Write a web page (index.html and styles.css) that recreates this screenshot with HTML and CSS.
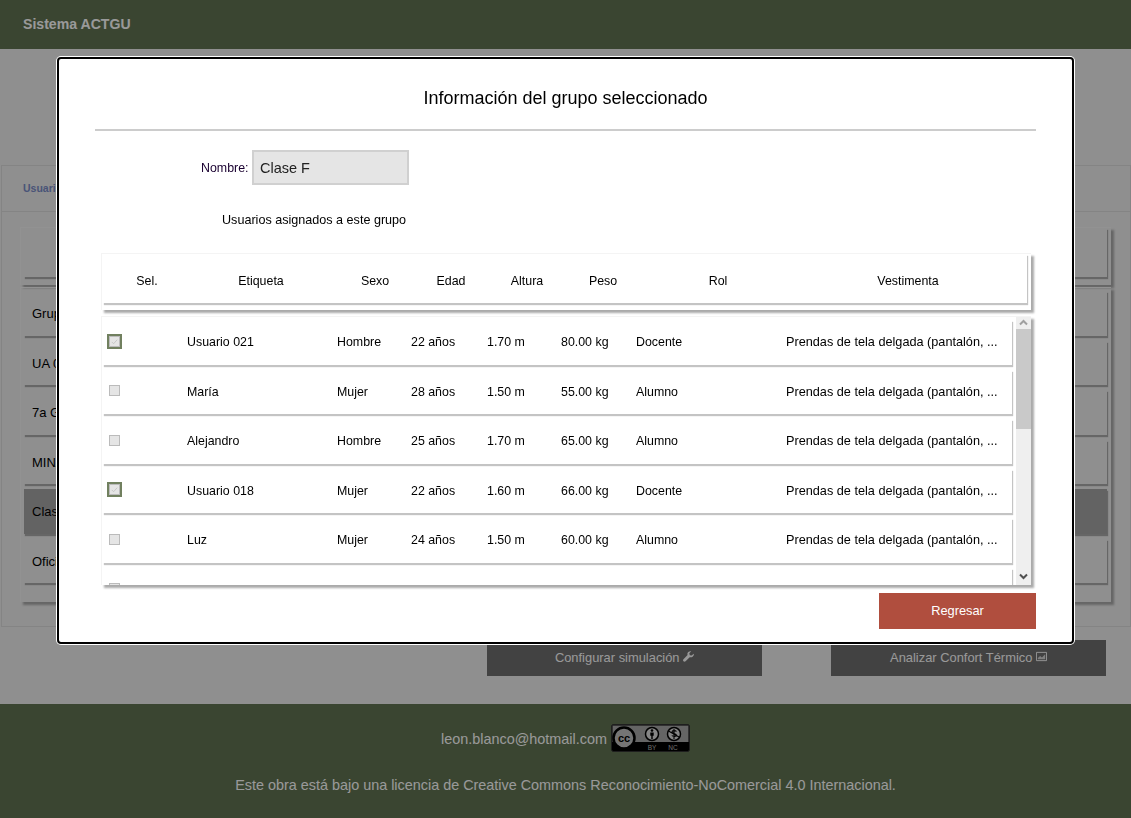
FILE: index.html
```html
<!DOCTYPE html>
<html>
    <head>
        <meta http-equiv=Content-Type content=text/html;charset=UTF-8>
        <title>Sistema ACTGU</title>
        <link rel="stylesheet" href="styles.css">
    </head>
    <body>
        <header class=topbar>Sistema ACTGU</header>

        <main class=page>
            <section class=panel>
                <div class=tabs><a class=tab>Usuarios</a></div>
                <div class=groups>
                    <div class="card card-head">
                        <div class="row"></div>
                    </div>
                    <div class="card card-list">
                        <div class="row">Grupo A</div>
                        <div class="row">UA 01</div>
                        <div class="row">7a Generación</div>
                        <div class="row">MINAE</div>
                        <div class="row row-active">Clase F</div>
                        <div class="row">Oficina</div>
                    </div>
                </div>
            </section>
            <div class=actions>
                <a class=action>Configurar simulación
                    <svg class=icon viewBox="0 0 12 12"><path d="M11.6 2.9 9.5 5 7.4 4.5 6.9 2.4 9 .3C7.4-.2 5.6.6 5 2.2c-.3.8-.3 1.5 0 2.2L.5 8.9c-.6.6-.6 1.6 0 2.3.6.6 1.6.6 2.3 0l4.5-4.5c1.800.7 3.700-.2 4.400-2 .2-.6.2-1.200-.1-1.800z" fill="currentColor"/></svg>
                </a>
                <a class=action>Analizar Confort Térmico
                    <svg class=icon viewBox="0 0 12 10"><path d="M.5.5h11v9H.5z" fill="none" stroke="currentColor"/><path d="M2 8V6.500l2.500-2 2 1.500L10 2.500V8z" fill="currentColor" opacity=".7"/></svg>
                </a>
            </div>
        </main>

        <footer class=footer>
            <div class=contact>
                <span class=email>leon.blanco@hotmail.com</span>
                <svg class=cc viewBox="0 0 79 28">
                    <rect x=".5" y=".5" width="78" height="27" rx="2" fill="#000" stroke="#333"/>
                    <rect x="1.500" y="1.500" width="76" height="16.500" fill="#a8a8a8"/>
                    <circle cx="13" cy="14" r="10.500" fill="#c4c4c4" stroke="#000" stroke-width="2.500"/>
                    <text x="13" y="18" class=cc-mark>cc</text>
                    <circle cx="41" cy="10" r="6.500" fill="#e0e0e0" stroke="#000" stroke-width="1.500"/>
                    <circle cx="41" cy="6.500" r="1.300" fill="#000"/>
                    <path d="M39.300 8.500h3.400v3.200h-1v3.300h-1.400v-3.300h-1z" fill="#000"/>
                    <circle cx="63" cy="10" r="6.500" fill="#e0e0e0" stroke="#000" stroke-width="1.500"/>
                    <path d="M57.500 7 68 13M65.500 7.500c-1-1.200-4.500-1.200-4.500.5 0 2 4.500 1 4.500 3.200 0 1.500-3.500 1.600-4.700.3M63 5v10" fill="none" stroke="#000" stroke-width="1.100"/>
                    <text x="41" y="25.500" class=cc-label>BY</text>
                    <text x="62" y="25.500" class=cc-label>NC</text>
                </svg>
            </div>
            <p class=license>Este obra está bajo una licencia de Creative Commons Reconocimiento-NoComercial 4.0 Internacional.</p>
        </footer>

        <div class=overlay>
            <div class=modal>
                <h2 class=modal-title>Información del grupo seleccionado</h2>
                <div class=name-field>
                    <label class=name-label>Nombre:</label>
                    <input class=name-input type=text value="Clase F" disabled>
                </div>
                <p class=assigned>Usuarios asignados a este grupo</p>

                <div class="card table-head">
                    <div class="row head-row">
                        <span>Sel.</span>
                        <span>Etiqueta</span>
                        <span>Sexo</span>
                        <span>Edad</span>
                        <span>Altura</span>
                        <span>Peso</span>
                        <span>Rol</span>
                        <span>Vestimenta</span>
                    </div>
                </div>

                <div class="card table-body">
                    <div class=rows>
                        <div class="row user-row">
                            <span class="check checked"><svg viewBox="0 0 10 10"><path d="M2 5.500 4 7.500 8 3" fill="none" stroke="#c4c4c4"/></svg></span>
                            <span>Usuario 021</span><span>Hombre</span><span>22 años</span><span>1.70 m</span><span>80.00 kg</span><span>Docente</span>
                            <span class=clothes>Prendas de tela delgada (pantalón, ...</span>
                        </div>
                        <div class="row user-row">
                            <span class=check></span>
                            <span>María</span><span>Mujer</span><span>28 años</span><span>1.50 m</span><span>55.00 kg</span><span>Alumno</span>
                            <span class=clothes>Prendas de tela delgada (pantalón, ...</span>
                        </div>
                        <div class="row user-row">
                            <span class=check></span>
                            <span>Alejandro</span><span>Hombre</span><span>25 años</span><span>1.70 m</span><span>65.00 kg</span><span>Alumno</span>
                            <span class=clothes>Prendas de tela delgada (pantalón, ...</span>
                        </div>
                        <div class="row user-row">
                            <span class="check checked"><svg viewBox="0 0 10 10"><path d="M2 5.500 4 7.500 8 3" fill="none" stroke="#c4c4c4"/></svg></span>
                            <span>Usuario 018</span><span>Mujer</span><span>22 años</span><span>1.60 m</span><span>66.00 kg</span><span>Docente</span>
                            <span class=clothes>Prendas de tela delgada (pantalón, ...</span>
                        </div>
                        <div class="row user-row">
                            <span class=check></span>
                            <span>Luz</span><span>Mujer</span><span>24 años</span><span>1.50 m</span><span>60.00 kg</span><span>Alumno</span>
                            <span class=clothes>Prendas de tela delgada (pantalón, ...</span>
                        </div>
                        <div class="row user-row">
                            <span class=check></span>
                        </div>
                    </div>
                    <div class=scrollbar>
                        <svg class=arrow viewBox="0 0 15 12"><path d="M4 7.500 7.500 4 11 7.500" fill="none" stroke="#a0a0a0" stroke-width="2"/></svg>
                        <div class=thumb></div>
                        <svg class="arrow arrow-down" viewBox="0 0 15 12"><path d="M4 4.500 7.500 8 11 4.500" fill="none" stroke="#505050" stroke-width="2"/></svg>
                    </div>
                </div>

                <div class=modal-foot>
                    <button class=back>Regresar</button>
                </div>
            </div>
        </div>
    </body>
</html>
```

FILE: styles.css
```css
html, body {
    height: 100%;
}
body {
    margin: 0;
    height: 818px;
    overflow: hidden;
    background: #eee;
    color: #000;
    font: 12.4px "Liberation Sans", Arial, sans-serif;
}
.topbar {
    height: 49px;
    line-height: 48px;
    padding-left: 23px;
    background: #617352;
    color: #fff;
    font-size: 14.100px;
    font-weight: bold;
}
.page {
    height: 655px;
    padding-top: 116px;
    box-sizing: border-box;
}
.panel {
    height: 462px;
    box-sizing: border-box;
    border: 1px solid #ddd;
    margin-left: 1px;
}
.tabs {
    height: 46px;
    line-height: 45px;
    padding-left: 21px;
    border-bottom: 1px solid #ddd;
    box-sizing: border-box;
}
.tab {
    color: #7b8cc8;
    font-size: 10.500px;
    font-weight: bold;
}
.groups {
    padding: 15px 19px 0 18px;
}
.card {
    box-shadow: 3px 3px 2px #aaa;
    border-left: 1px solid #f4f4f4;
    border-top: 1px solid #f4f4f4;
}
.row {
    height: 44.500px;
    margin-bottom: 5px;
    background: #fff;
    box-shadow: 1px 2px 1px #c4c4c4;
    box-sizing: border-box;
}
.card-head {
    padding: 0 4px 0 3px;
    height: 58px;
    box-sizing: border-box;
}
.card-head .row {
    height: 49px;
}
.card-list {
    margin-top: 2px;
    padding: 3px 4px 0 3px;
    height: 315px;
    box-sizing: border-box;
    font-size: 13px;
}
.card-list .row {
    padding-left: 8px;
    line-height: 45px;
    margin-bottom: 5.100px;
}
.groups .row {
    background: #eee;
    box-shadow: 1px 2px 1px #aaa;
}
.groups .row.row-active {
    background: #a5a5a5;
}
.actions {
    display: flex;
    justify-content: flex-end;
    gap: 69px;
    padding: 13px 25px 0 0;
}
.action {
    width: 275px;
    height: 36px;
    line-height: 36px;
    background: #6e6e6e;
    color: #fff;
    font-size: 12.900px;
    text-align: center;
}
.icon {
    width: 11px;
    height: 11px;
}
.footer {
    height: 114px;
    background: #617352;
    color: #fff;
    font-size: 14.400px;
    text-align: center;
}
.contact {
    display: flex;
    justify-content: center;
    align-items: center;
    gap: 4px;
    padding-top: 20px;
}
.email {
    margin-top: 2px;
}
.cc {
    width: 79px;
    height: 28px;
}
.cc-mark {
    font: bold 11px "Liberation Sans", sans-serif;
    text-anchor: middle;
}
.cc-label {
    font: 6.500px "Liberation Sans", sans-serif;
    fill: #bbb;
    text-anchor: middle;
}
.license {
    margin: 25px 0 0;
}

/* dialog over the dimmed page */
.overlay {
    position: fixed;
    top: 0;
    left: 0;
    right: 0;
    bottom: 0;
    background: rgba(0, 0, 0, 0.4);
}
.modal {
    position: absolute;
    left: 57px;
    top: 57px;
    width: 1017px;
    height: 587px;
    box-sizing: border-box;
    padding: 0 36px;
    background: #fff;
    border: 2px solid #000;
    border-radius: 4px;
    box-shadow: 0 0 0 1px #fff;
}
.modal-title {
    margin: 0;
    height: 70px;
    line-height: 79px;
    border-bottom: 2px solid #ccc;
    font-size: 18px;
    font-weight: normal;
    text-align: center;
}
.name-field {
    display: flex;
    align-items: center;
    gap: 3px;
    margin: 19px 0 0 106px;
}
.name-label {
    color: #1a0030;
}
.name-input {
    width: 157px;
    height: 35px;
    box-sizing: border-box;
    padding: 0 6.500px;
    background: #e5e5e5;
    border: 2px solid #d0d0d0;
    color: #222;
    font: 14.500px "Liberation Sans", sans-serif;
    opacity: 1;
}
.assigned {
    margin: 28px 0 0 127px;
    font-size: 12.600px;
    line-height: 15px;
}
.table-head {
    margin: 25px 0 0 6px;
    width: 930px;
    height: 57px;
    padding: 0 4px 0 1px;
    box-sizing: border-box;
}
.head-row {
    display: grid;
    grid-template-columns: 88px 140px 88px 64px 88px 64px 166px 214px;
    height: 49px;
    line-height: 55px;
    text-align: center;
}
.table-body {
    display: flex;
    margin: 6px 0 0 6px;
    width: 930px;
    height: 269px;
    box-sizing: border-box;
    overflow: hidden;
    padding: 0 0 0 1px;
}
.rows {
    width: 913px;
    height: 268px;
    padding-top: 3.300px;
    box-sizing: border-box;
    overflow: hidden;
}
.user-row {
    display: grid;
    grid-template-columns: 84px 150px 74px 76px 74px 75px 150px 1fr;
    align-items: center;
    width: 909px;
    padding-bottom: 1px;
}
.clothes {
    font-size: 12.700px;
    white-space: nowrap;
}
.check {
    width: 11px;
    height: 11px;
    margin: 0 0 2px 6px;
    box-sizing: border-box;
    background: #e5e5e5;
    border: 1px solid #bbb;
}
.check svg {
    display: block;
    width: 9px;
    height: 9px;
}
.check.checked {
    box-shadow: 0 0 0 2px #71805f;
}
.scrollbar {
    display: flex;
    flex-direction: column;
    width: 15px;
    height: 268px;
    background: #efefef;
}
.arrow {
    display: block;
    width: 15px;
    height: 12px;
    flex: none;
}
.arrow-down {
    margin-top: auto;
    margin-bottom: 3px;
}
.thumb {
    height: 100px;
    background: #c9c9c9;
}
.modal-foot {
    display: flex;
    justify-content: flex-end;
    padding-top: 8px;
}
.back {
    width: 157px;
    height: 36px;
    padding: 0 0 2px;
    border: 0;
    background: #b04e3e;
    color: #fff;
    font: 12.800px "Liberation Sans", sans-serif;
}
```
